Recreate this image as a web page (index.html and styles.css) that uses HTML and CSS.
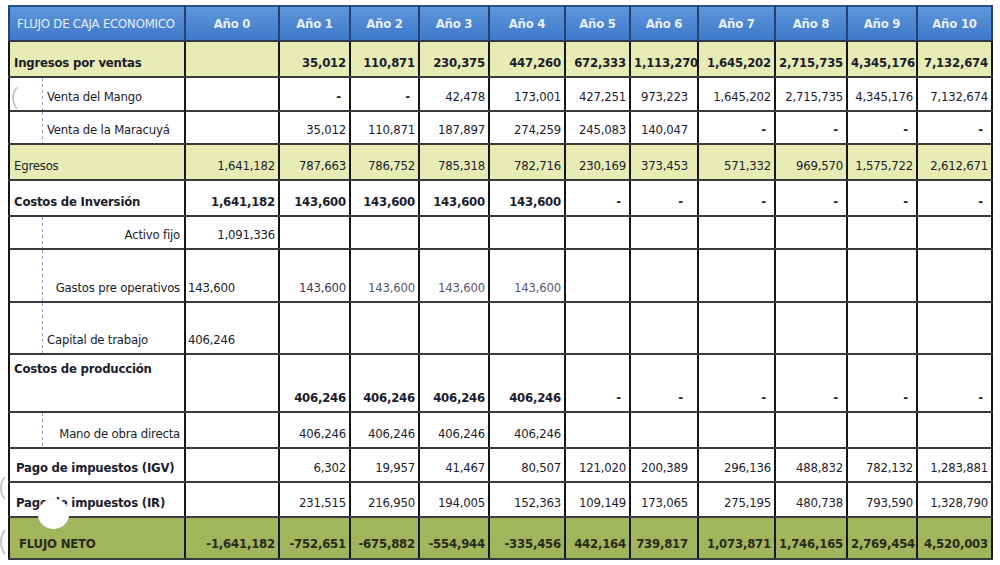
FILE: index.html
```html
<!DOCTYPE html>
<html lang="es">
<head>
<meta charset="utf-8">
<title>Flujo de Caja Económico</title>
<link rel="stylesheet" href="styles.css">
</head>
<body>
<div class="sheet">
<table class="fc">
  <colgroup>
    <col class="w0"><col class="w1"><col class="w2"><col class="w3"><col class="w4"><col class="w5">
    <col class="w6"><col class="w7"><col class="w8"><col class="w9"><col class="w10"><col class="w11">
  </colgroup>
  <thead>
    <tr class="hd">
      <th class="title">FLUJO DE CAJA ECONOMICO</th>
      <th>Año 0</th><th>Año 1</th><th>Año 2</th><th>Año 3</th><th>Año 4</th><th>Año 5</th>
      <th>Año 6</th><th>Año 7</th><th>Año 8</th><th>Año 9</th><th>Año 10</th>
    </tr>
  </thead>
  <tbody>
    <tr class="sum r36 b">
      <td class="lab">Ingresos por ventas</td>
      <td></td><td>35,012</td><td>110,871</td><td>230,375</td><td>447,260</td><td>672,333</td>
      <td class="y6">1,113,270</td><td>1,645,202</td><td>2,715,735</td><td>4,345,176</td><td>7,132,674</td>
    </tr>
    <tr class="r34">
      <td class="lab sub dotb">Venta del Mango</td>
      <td></td><td class="dash">-</td><td class="dash">-</td><td>42,478</td><td>173,001</td><td>427,251</td>
      <td class="y6">973,223</td><td>1,645,202</td><td>2,715,735</td><td>4,345,176</td><td>7,132,674</td>
    </tr>
    <tr class="r33">
      <td class="lab sub">Venta de la Maracuyá</td>
      <td></td><td>35,012</td><td>110,871</td><td>187,897</td><td>274,259</td><td>245,083</td>
      <td class="y6">140,047</td><td class="dash">-</td><td class="dash">-</td><td class="dash">-</td><td class="dash">-</td>
    </tr>
    <tr class="sum r36">
      <td class="lab">Egresos</td>
      <td>1,641,182</td><td>787,663</td><td>786,752</td><td>785,318</td><td>782,716</td><td>230,169</td>
      <td class="y6">373,453</td><td>571,332</td><td>969,570</td><td>1,575,722</td><td>2,612,671</td>
    </tr>
    <tr class="r36 b">
      <td class="lab">Costos de Inversión</td>
      <td>1,641,182</td><td>143,600</td><td>143,600</td><td>143,600</td><td>143,600</td><td class="dash">-</td>
      <td class="y6 dash">-</td><td class="dash">-</td><td class="dash">-</td><td class="dash">-</td><td class="dash">-</td>
    </tr>
    <tr class="r33">
      <td class="lab subr dotb">Activo fijo</td>
      <td>1,091,336</td><td></td><td></td><td></td><td></td><td></td>
      <td></td><td></td><td></td><td></td><td></td>
    </tr>
    <tr class="r53">
      <td class="lab subr dotb">Gastos pre operativos</td>
      <td class="left">143,600</td><td class="soft">143,600</td><td class="faint">143,600</td><td class="faint">143,600</td><td class="faint">143,600</td><td></td>
      <td></td><td></td><td></td><td></td><td></td>
    </tr>
    <tr class="r52">
      <td class="lab sub dotb">Capital de trabajo</td>
      <td class="left">406,246</td><td></td><td></td><td></td><td></td><td></td>
      <td></td><td></td><td></td><td></td><td></td>
    </tr>
    <tr class="r52 b">
      <td class="lab top">Costos de producción</td>
      <td></td><td>406,246</td><td>406,246</td><td>406,246</td><td>406,246</td><td class="dash">-</td>
      <td class="y6 dash">-</td><td class="dash">-</td><td class="dash">-</td><td class="dash">-</td><td class="dash">-</td>
    </tr>
    <tr class="r36">
      <td class="lab subr dotb">Mano de obra directa</td>
      <td></td><td>406,246</td><td>406,246</td><td>406,246</td><td>406,246</td><td></td>
      <td></td><td></td><td></td><td></td><td></td>
    </tr>
    <tr class="r34 b">
      <td class="lab tax">Pago de impuestos (IGV)</td>
      <td></td><td class="n">6,302</td><td class="n">19,957</td><td class="n">41,467</td><td class="n">80,507</td><td class="n">121,020</td>
      <td class="y6 n">200,389</td><td class="n">296,136</td><td class="n">488,832</td><td class="n">782,132</td><td class="n">1,283,881</td>
    </tr>
    <tr class="r35 b">
      <td class="lab tax">Pago de impuestos (IR)</td>
      <td></td><td class="n">231,515</td><td class="n">216,950</td><td class="n">194,005</td><td class="n">152,363</td><td class="n">109,149</td>
      <td class="y6 n">173,065</td><td class="n">275,195</td><td class="n">480,738</td><td class="n">793,590</td><td class="n">1,328,790</td>
    </tr>
    <tr class="net r41">
      <td class="lab">FLUJO NETO</td>
      <td>-1,641,182</td><td>-752,651</td><td>-675,882</td><td>-554,944</td><td>-335,456</td><td>442,164</td>
      <td class="y6">739,817</td><td>1,073,871</td><td>1,746,165</td><td>2,769,454</td><td>4,520,003</td>
    </tr>
  </tbody>
</table>
<div class="hole hole-main"></div>
<div class="ring ring-a"></div>
<div class="ring ring-b"></div>
<div class="ring ring-c"></div>
</div>
</body>
</html>
```

FILE: styles.css
```css
html, body {
  margin: 0;
  padding: 0;
  background: #ffffff;
}
body {
  font-family: "DejaVu Sans Condensed", "Liberation Sans", Arial, sans-serif;
  color: #1c1c2c;
}
.sheet {
  position: relative;
  padding: 5px 0 0 8px;
  width: 992px;
  height: 560px;
}
.fc {
  border-collapse: collapse;
  table-layout: fixed;
  width: 983px;
  font-size: 13px;
}
.w0 { width: 176px; }
.w1 { width: 94px; }
.w2 { width: 71px; }
.w3 { width: 69px; }
.w4 { width: 70px; }
.w5 { width: 76px; }
.w6 { width: 65px; }
.w7 { width: 68px; }
.w8 { width: 77px; }
.w9 { width: 72px; }
.w10 { width: 70px; }
.w11 { width: 75px; }

.fc th, .fc td {
  border-top: 2px solid #3a3a3a;
  border-bottom: 2px solid #3a3a3a;
  border-left: 2px solid #161616;
  border-right: 2px solid #161616;
  padding: 0 3px 5px 3px;
  white-space: nowrap;
  overflow: hidden;
  text-align: right;
  vertical-align: bottom;
  line-height: 16px;
  letter-spacing: -0.2px;
}
.hd th {
  height: 33px;
  background: linear-gradient(#5f98dc, #3d77c8);
  color: #e6efff;
  font-weight: bold;
  font-size: 13px;
  text-align: center;
  vertical-align: middle;
  padding: 0 2px;
  border-top: 2px solid #2b4f86;
  border-left: 2px solid #24436f;
  border-right: 2px solid #24436f;
  border-bottom: 2px solid #2e3a4a;
}
.hd th.title {
  text-align: left;
  font-weight: normal;
  font-size: 13px;
  padding-left: 7px;
  letter-spacing: -0.2px;
}

.r33 td { height: 26px; }
.r34 td { height: 27px; }
.r35 td { height: 28px; }
.r36 td { height: 29px; }
.r41 td { height: 34px; }
.r52 td { height: 45px; }
.r53 td { height: 46px; }

.b td { font-weight: bold; }
.sum td { background: #e6ecb4; }
.net td {
  background: #a2b45c;
  font-weight: bold;
  color: #2a2a1c;
  padding-bottom: 6px;
}

.fc td.lab {
  text-align: left;
  padding-left: 4px;
}
.fc tr.sum td.lab { font-weight: normal; }
.fc tr.b.sum td.lab { font-weight: bold; }
.fc tr.net td.lab { padding-left: 9px; font-weight: bold; }
.fc td.sub {
  padding-left: 37px;
  background: repeating-linear-gradient(to bottom, #8fa8d0 0 3px, transparent 3px 6px) 32px 0 / 1px 100% no-repeat;
}
.fc td.subr {
  text-align: right;
  padding-right: 4px;
  background: repeating-linear-gradient(to bottom, #8fa8d0 0 3px, transparent 3px 6px) 32px 0 / 1px 100% no-repeat;
}
.fc td.dotb { border-bottom: 2px dotted #9ab3d8; }
.fc td.top { vertical-align: top; padding-top: 6px; }
.fc td.tax { padding-left: 6px; }

.fc td.left { text-align: left; padding-left: 2px; }
.fc td.y6 { padding-right: 9px; }
.fc td.dash { font-weight: bold; padding-right: 8px; }
.fc td.y6.dash { padding-right: 14px; }
.fc td.n { font-weight: normal; }
.fc td.soft { color: #3a3a55; }
.fc td.faint { color: #5c5670; }

.hole {
  position: absolute;
  border-radius: 50%;
  background: #ffffff;
}
.hole-main {
  left: 38px;
  top: 499px;
  width: 31px;
  height: 30px;
  box-shadow: 0 0 1px #ccc;
}
.ring {
  position: absolute;
  border-radius: 50%;
  border: 2px solid transparent;
  border-left-color: #c8c8c8;
}
.ring-a { left: 12px; top: 82px; width: 26px; height: 28px; }
.ring-b { left: 0px; top: 472px; width: 22px; height: 28px; }
.ring-c { left: 0px; top: 525px; width: 22px; height: 30px; }
```
